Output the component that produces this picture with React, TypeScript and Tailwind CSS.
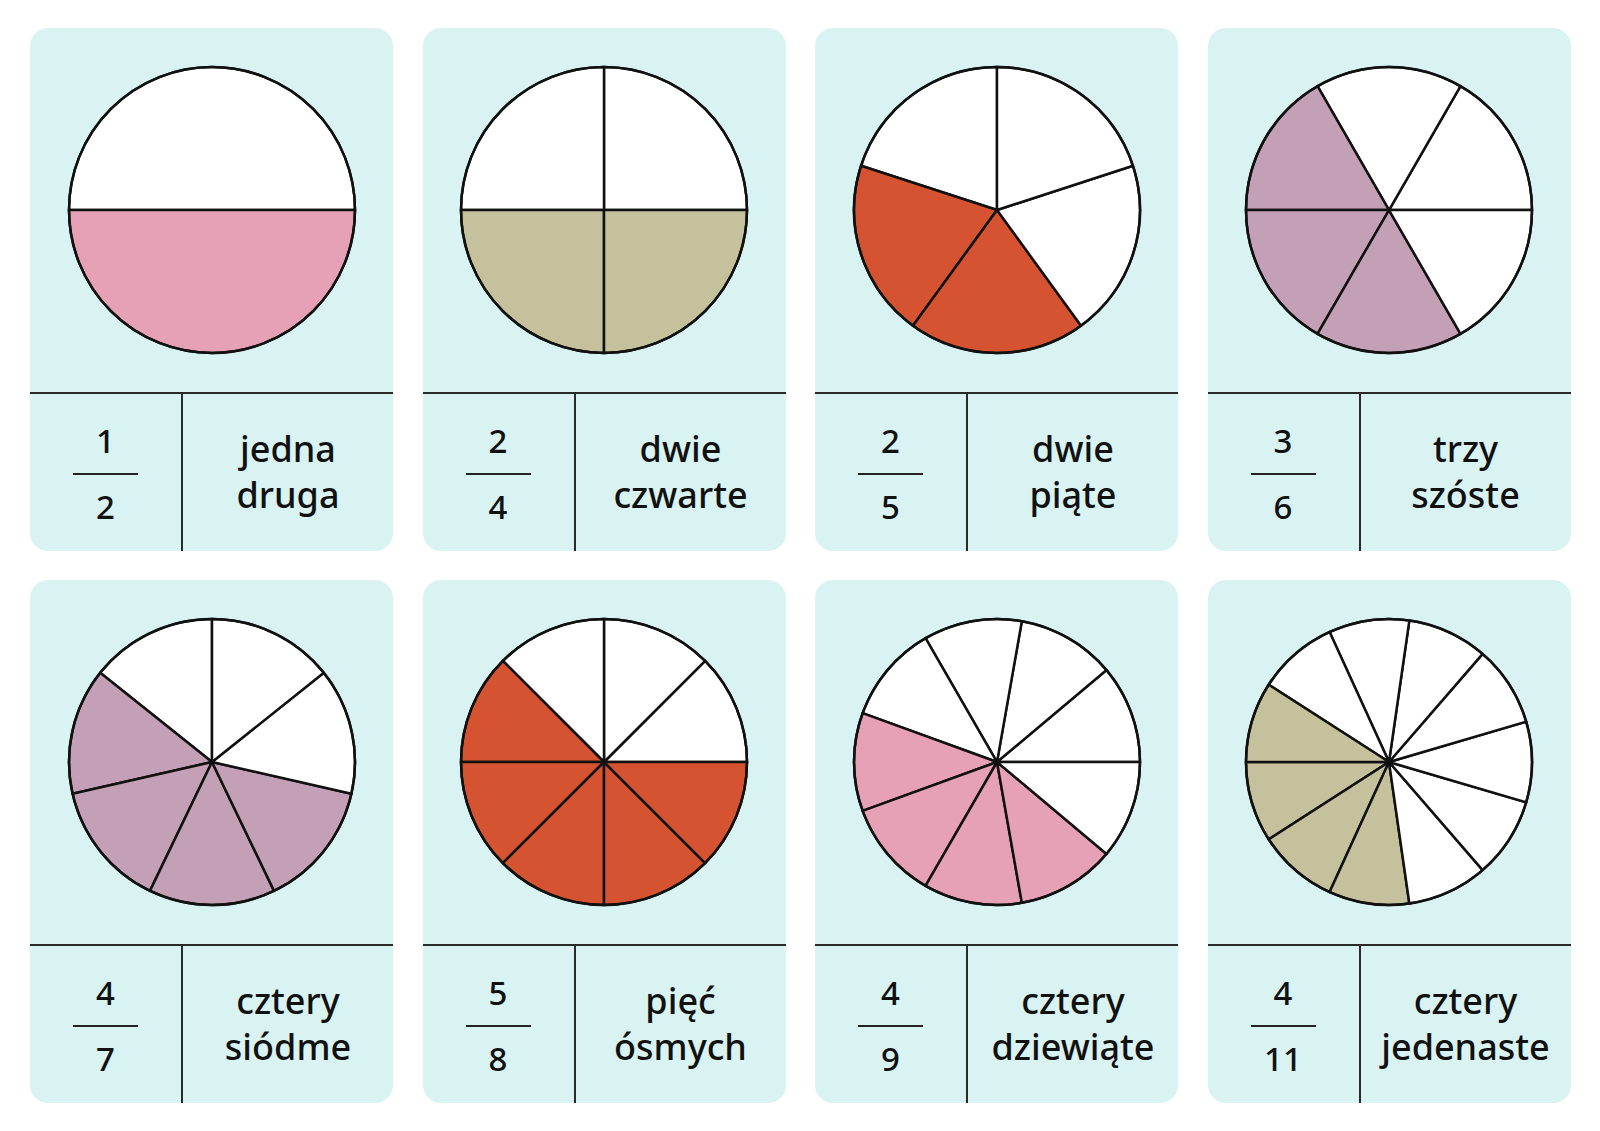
type Card = {
  n: number;
  offset: number;
  colored: number[];
  fill: string;
  num: string;
  den: string;
  words: [string, string];
};

const PINK = "#e7a1b6";
const KHAKI = "#c6c19d";
const RED = "#d55331";
const MAUVE = "#c4a0b7";

const cards: Card[] = [
  { n: 2, offset: 0, colored: [1], fill: PINK, num: "1", den: "2", words: ["jedna", "druga"] },
  { n: 4, offset: 0, colored: [2, 3], fill: KHAKI, num: "2", den: "4", words: ["dwie", "czwarte"] },
  { n: 5, offset: 90, colored: [1, 2], fill: RED, num: "2", den: "5", words: ["dwie", "piąte"] },
  { n: 6, offset: 0, colored: [2, 3, 4], fill: MAUVE, num: "3", den: "6", words: ["trzy", "szóste"] },
  { n: 7, offset: 90, colored: [1, 2, 3, 4], fill: MAUVE, num: "4", den: "7", words: ["cztery", "siódme"] },
  { n: 8, offset: 0, colored: [3, 4, 5, 6, 7], fill: RED, num: "5", den: "8", words: ["pięć", "ósmych"] },
  { n: 9, offset: 0, colored: [4, 5, 6, 7], fill: PINK, num: "4", den: "9", words: ["cztery", "dziewiąte"] },
  { n: 11, offset: 180, colored: [0, 1, 2, 10], fill: KHAKI, num: "4", den: "11", words: ["cztery", "jedenaste"] },
];

const C = 146;
const R = 143;

function point(deg: number) {
  const a = (deg * Math.PI) / 180;
  return [C + R * Math.cos(a), C - R * Math.sin(a)];
}

function Pie({ card }: { card: Card }) {
  const step = 360 / card.n;
  const slices = Array.from({ length: card.n }, (_, i) => {
    const a1 = card.offset + i * step;
    const a2 = a1 + step;
    const [x1, y1] = point(a1);
    const [x2, y2] = point(a2);
    const large = step > 180 ? 1 : 0;
    const d = `M ${C} ${C} L ${x1} ${y1} A ${R} ${R} 0 ${large} 0 ${x2} ${y2} Z`;
    return (
      <path
        key={i}
        d={d}
        fill={card.colored.includes(i) ? card.fill : "#ffffff"}
        stroke="#111"
        strokeWidth={2.5}
        strokeLinejoin="round"
      />
    );
  });
  return (
    <svg width={292} height={292} viewBox="0 0 292 292">
      {slices}
      <circle cx={C} cy={C} r={R} fill="none" stroke="#111" strokeWidth={2.5} />
    </svg>
  );
}

function FractionCard({ card }: { card: Card }) {
  return (
    <div className="flex h-[523px] w-[363px] flex-col overflow-hidden rounded-[18px] bg-[#d9f3f2]">
      <div className="flex h-[364px] items-center justify-center">
        <Pie card={card} />
      </div>
      <div className="flex flex-1 border-t-2 border-[#2a2a2a]">
        <div className="flex w-[153px] flex-col items-center justify-center border-r-2 border-[#2a2a2a] pt-[2px]">
          <span className="text-[33px] leading-[36px]">{card.num}</span>
          <span className="my-[14px] h-[2px] w-[65px] bg-[#222]" />
          <span className="text-[33px] leading-[36px]">{card.den}</span>
        </div>
        <div className="flex flex-1 flex-col items-center justify-center pb-[2px] text-[36px] leading-[46px]">
          <span>{card.words[0]}</span>
          <span>{card.words[1]}</span>
        </div>
      </div>
    </div>
  );
}

export default function App() {
  return (
    <div className="min-h-[1131px] w-[1600px] bg-white pl-[30px] pt-[28px] font-['Noto_Sans',sans-serif] font-medium text-[#111]">
      <div className="grid grid-cols-[repeat(4,363px)] gap-x-[29.5px] gap-y-[29px]">
        {cards.map((c, i) => (
          <FractionCard key={i} card={c} />
        ))}
      </div>
    </div>
  );
}
